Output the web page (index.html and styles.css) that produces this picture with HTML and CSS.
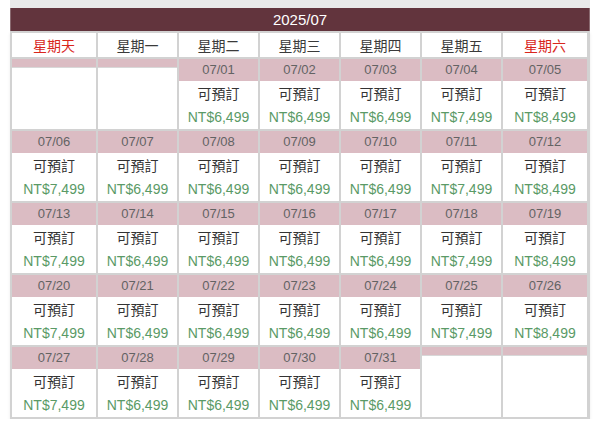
FILE: index.html
```html
<!DOCTYPE html>
<html lang="zh-Hant">
<head>
<meta charset="utf-8">
<link rel="stylesheet" href="styles.css">
</head>
<body>
<div class="cal">
  <div class="topstrip"></div>
  <div class="title">2025/07</div>
  <div class="grid">
    <div class="dow red">星期天</div>
    <div class="dow">星期一</div>
    <div class="dow">星期二</div>
    <div class="dow">星期三</div>
    <div class="dow">星期四</div>
    <div class="dow">星期五</div>
    <div class="dow red">星期六</div>

    <div class="cell empty"><div class="bar"></div><div class="blank"></div></div>
    <div class="cell empty"><div class="bar"></div><div class="blank"></div></div>
    <div class="cell"><div class="date">07/01</div><div class="st">可預訂</div><div class="price">NT$6,499</div></div>
    <div class="cell"><div class="date">07/02</div><div class="st">可預訂</div><div class="price">NT$6,499</div></div>
    <div class="cell"><div class="date">07/03</div><div class="st">可預訂</div><div class="price">NT$6,499</div></div>
    <div class="cell"><div class="date">07/04</div><div class="st">可預訂</div><div class="price">NT$7,499</div></div>
    <div class="cell"><div class="date">07/05</div><div class="st">可預訂</div><div class="price">NT$8,499</div></div>

    <div class="cell"><div class="date">07/06</div><div class="st">可預訂</div><div class="price">NT$7,499</div></div>
    <div class="cell"><div class="date">07/07</div><div class="st">可預訂</div><div class="price">NT$6,499</div></div>
    <div class="cell"><div class="date">07/08</div><div class="st">可預訂</div><div class="price">NT$6,499</div></div>
    <div class="cell"><div class="date">07/09</div><div class="st">可預訂</div><div class="price">NT$6,499</div></div>
    <div class="cell"><div class="date">07/10</div><div class="st">可預訂</div><div class="price">NT$6,499</div></div>
    <div class="cell"><div class="date">07/11</div><div class="st">可預訂</div><div class="price">NT$7,499</div></div>
    <div class="cell"><div class="date">07/12</div><div class="st">可預訂</div><div class="price">NT$8,499</div></div>

    <div class="cell"><div class="date">07/13</div><div class="st">可預訂</div><div class="price">NT$7,499</div></div>
    <div class="cell"><div class="date">07/14</div><div class="st">可預訂</div><div class="price">NT$6,499</div></div>
    <div class="cell"><div class="date">07/15</div><div class="st">可預訂</div><div class="price">NT$6,499</div></div>
    <div class="cell"><div class="date">07/16</div><div class="st">可預訂</div><div class="price">NT$6,499</div></div>
    <div class="cell"><div class="date">07/17</div><div class="st">可預訂</div><div class="price">NT$6,499</div></div>
    <div class="cell"><div class="date">07/18</div><div class="st">可預訂</div><div class="price">NT$7,499</div></div>
    <div class="cell"><div class="date">07/19</div><div class="st">可預訂</div><div class="price">NT$8,499</div></div>

    <div class="cell"><div class="date">07/20</div><div class="st">可預訂</div><div class="price">NT$7,499</div></div>
    <div class="cell"><div class="date">07/21</div><div class="st">可預訂</div><div class="price">NT$6,499</div></div>
    <div class="cell"><div class="date">07/22</div><div class="st">可預訂</div><div class="price">NT$6,499</div></div>
    <div class="cell"><div class="date">07/23</div><div class="st">可預訂</div><div class="price">NT$6,499</div></div>
    <div class="cell"><div class="date">07/24</div><div class="st">可預訂</div><div class="price">NT$6,499</div></div>
    <div class="cell"><div class="date">07/25</div><div class="st">可預訂</div><div class="price">NT$7,499</div></div>
    <div class="cell"><div class="date">07/26</div><div class="st">可預訂</div><div class="price">NT$8,499</div></div>

    <div class="cell"><div class="date">07/27</div><div class="st">可預訂</div><div class="price">NT$7,499</div></div>
    <div class="cell"><div class="date">07/28</div><div class="st">可預訂</div><div class="price">NT$6,499</div></div>
    <div class="cell"><div class="date">07/29</div><div class="st">可預訂</div><div class="price">NT$6,499</div></div>
    <div class="cell"><div class="date">07/30</div><div class="st">可預訂</div><div class="price">NT$6,499</div></div>
    <div class="cell"><div class="date">07/31</div><div class="st">可預訂</div><div class="price">NT$6,499</div></div>
    <div class="cell empty"><div class="bar"></div><div class="blank"></div></div>
    <div class="cell empty"><div class="bar"></div><div class="blank"></div></div>
  </div>
</div>
</body>
</html>
```

FILE: styles.css
```css
html, body {
  margin: 0;
  padding: 0;
  background: #ffffff;
}
body {
  padding-left: 10px;
  font-family: "Liberation Sans", "Noto Sans CJK TC", sans-serif;
}
.cal {
  width: 580px;
}
.topstrip {
  height: 8px;
  background: #e9e9e9;
}
.title {
  height: 23px;
  line-height: 23px;
  background: #62343d;
  color: #ffffff;
  text-align: center;
  font-size: 15px;
  border-left: 1px solid #8a6a70;
  border-right: 1px solid #8a6a70;
}
.grid {
  display: grid;
  grid-template-columns: 84px repeat(5, 79px) 84px;
  grid-auto-rows: auto;
  gap: 2px;
  padding: 2px;
  background: #d2d2d2;
  box-shadow: 0 2px 3px rgba(0,0,0,0.08);
}
.dow {
  height: 24px;
  line-height: 24px;
  background: #ffffff;
  text-align: center;
  font-size: 14px;
  color: #3a3a3a;
  font-family: "Noto Sans CJK TC", sans-serif;
}
.dow.red {
  color: #d9261c;
}
.cell {
  display: flex;
  flex-direction: column;
  background: #ffffff;
  height: 70px;
}
.date {
  height: 22px;
  line-height: 22px;
  background: #dbbcc3;
  text-align: center;
  font-size: 13px;
  color: #636363;
}
.st {
  height: 24px;
  line-height: 24px;
  text-align: center;
  font-size: 14px;
  color: #333333;
  font-family: "Noto Sans CJK TC", sans-serif;
}
.price {
  height: 24px;
  line-height: 24px;
  text-align: center;
  font-size: 14px;
  color: #5a9a66;
}
.empty .bar {
  height: 8px;
  background: #dbbcc3;
  border-bottom: 1px solid #d8d8d8;
}
.empty .blank {
  flex: 1;
  background: #ffffff;
}
```
